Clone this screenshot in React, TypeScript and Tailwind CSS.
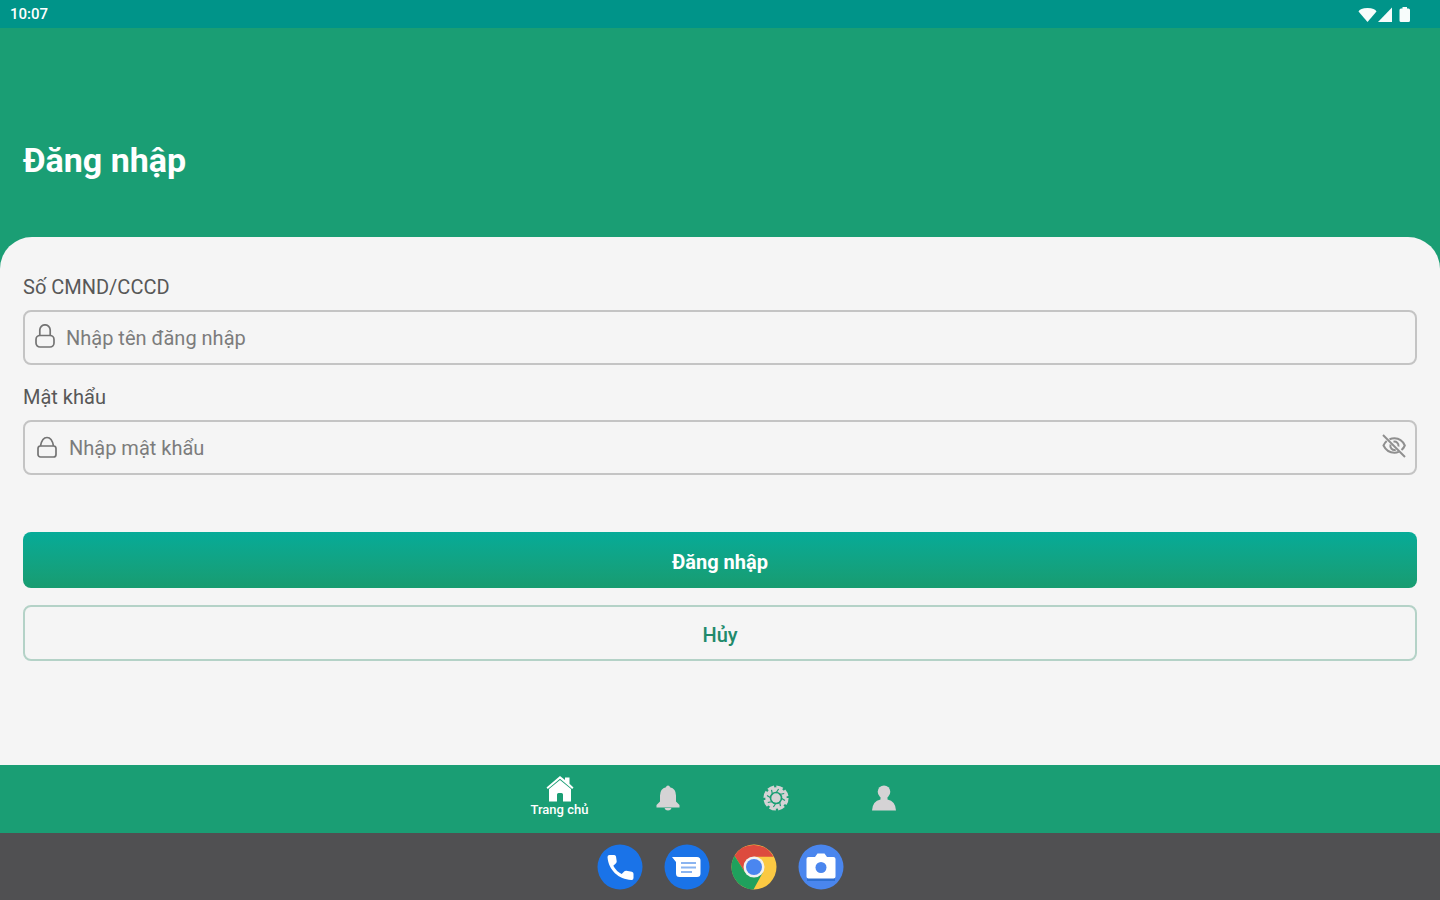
import { useState } from 'react';
import type { ReactNode } from 'react';

const StatusBar = () => (
  <div className="flex h-7 items-center justify-between bg-[#009489] pr-7 pl-[10px] text-white">
    <span className="text-[15px] leading-5 font-medium">10:07</span>
    <svg viewBox="0 0 54 18" className="h-[18px] w-[54px]" fill="#f7fcfb" aria-hidden="true">
      <path d="M9.500 17 .5 6.500Q2 3 9.500 3t9 3.500Z" />
      <path d="M20 17 34 2.500V17Z" />
      <path d="M43 3.500h1.500V2h4.500v1.500h1.500q1.500 0 1.500 1.500v10.500q0 1.500-1.500 1.500H43q-1.500 0-1.500-1.500V5q0-1.500 1.500-1.500Z" />
    </svg>
  </div>
);

const LockIcon = ({ tall = false }: { tall?: boolean }) => (
  <svg viewBox="0 0 24 28" className="h-7 w-6 shrink-0" fill="none" stroke="currentColor" strokeWidth="1.700" aria-hidden="true">
    {tall ? (
      <>
        <path d="M6.800 11.500V6a5.200 5.200 0 0 1 10.400 0v5.500" />
        <rect x="3" y="11.500" width="18" height="11.500" rx="4" />
      </>
    ) : (
      <>
        <path d="M5.500 12q1.500-8.500 6.500-8.500t6.500 8.500" />
        <rect x="3" y="12" width="18" height="11" rx="2.500" />
      </>
    )}
  </svg>
);

const EyeOffIcon = () => (
  <svg viewBox="0 0 26 30" className="h-[30px] w-[26px]" fill="none" stroke="#8f8f8f" strokeWidth="2" aria-hidden="true">
    <path d="M8.500 6.300Q11 5.300 13.500 5.300q7 0 10.300 7.200-1.100 2.700-3.300 4.500M5.700 8Q3.700 9.800 2.500 12.500q3.500 7.200 11 7.200 2.200 0 4.200-.800" />
    <path d="M12.500 8.700a4.200 4.200 0 0 1 5 4.800M9.500 11.500a4.300 4.300 0 0 0 5.200 5.400" />
    <path d="m2 2 22 22" />
  </svg>
);

interface FieldProps {
  id: string;
  label: string;
  placeholder: string;
  type: string;
  icon: ReactNode;
  action?: ReactNode;
  className: string;
}

const Field = ({ id, label, placeholder, type, icon, action, className }: FieldProps) => (
  <div className="flex flex-col gap-[11px]">
    <label htmlFor={id} className="text-[20px] leading-6 text-[#585858]">{label}</label>
    <div className={`flex h-[55px] items-center rounded-lg border-2 border-[#c4c4c4] pr-2 text-[#747474] ${className}`}>
      {icon}
      <input
        id={id}
        type={type}
        placeholder={placeholder}
        className="h-full min-w-0 flex-1 bg-transparent text-[20px] leading-6 outline-none placeholder:text-[#7c7c7c]"
      />
      {action}
    </div>
  </div>
);

const HomeIcon = () => (
  <svg viewBox="0 0 28 26" className="h-[26px] w-7" fill="currentColor" aria-hidden="true">
    <path d="M14 0 19 4V1.500h4.500V7.800l4 3.700-1.300 1.600L14 2.800 1.800 13.100.5 11.500Z" />
    <path d="M14 4 25 13v12.500H17V18.500q0-1.500-1.500-1.500h-3Q11 17 11 18.500v7H3V13Z" />
  </svg>
);

const BellIcon = () => (
  <svg viewBox="0 0 24 26" className="h-[26px] w-6" fill="currentColor" aria-hidden="true">
    <path d="M12 .5q1.800 0 2 1.800 6 1.500 6 8.300v5.900l3.500 3.400V22.500H.5v-2.600L4 16.500v-5.900q0-6.800 6-8.300.2-1.800 2-1.800Z" />
    <path d="M8.500 23h7q-.700 2.500-3.500 2.500T8.500 23Z" />
  </svg>
);

const GearIcon = () => (
  <svg viewBox="0 0 26 26" className="h-[26px] w-[26px]" fill="none" stroke="currentColor" aria-hidden="true">
    <circle cx="13" cy="13" r="11.400" strokeWidth="2.400" strokeDasharray="6.700 2.253" />
    <circle cx="13" cy="13" r="8.500" strokeWidth="4.400" />
    <circle cx="13" cy="13" r="4.700" fill="currentColor" stroke="none" />
    <path
      d="m13 8 2.600-4M16.500 9.500l4.700-1M18 13l4 2.600M16.500 16.500l1 4.700M13 18l-2.600 4M9.500 16.500l-4.700 1M8 13l-4-2.600M9.500 9.500l-1-4.700"
      stroke="#1a9e74"
      strokeWidth="1.200"
    />
  </svg>
);

const UserIcon = () => (
  <svg viewBox="0 0 26 26" className="h-[26px] w-[26px]" fill="currentColor" aria-hidden="true">
    <circle cx="13" cy="6.800" r="6.300" />
    <path d="M9.500 11.500h7v3q8 1.500 8.500 11H1q.5-9.500 8.500-11Z" />
  </svg>
);

const tabs = [
  { name: 'Trang chủ', icon: <HomeIcon />, active: true },
  { name: 'Thông báo', icon: <BellIcon /> },
  { name: 'Cài đặt', icon: <GearIcon /> },
  { name: 'Tài khoản', icon: <UserIcon /> },
];

const TabBar = () => (
  <nav className="flex h-[68px] justify-center bg-[#1a9e74] pl-[3px]">
    {tabs.map(tab => (
      <button
        key={tab.name}
        type="button"
        aria-label={tab.name}
        className={`flex w-[108px] flex-col items-center justify-center ${tab.active ? 'pb-1 text-white' : 'pb-[2px] text-[#d5d3d5]'}`}
      >
        {tab.icon}
        {tab.active && <span className="text-[13px] leading-4 font-medium">{tab.name}</span>}
      </button>
    ))}
  </nav>
);

const PhoneApp = () => (
  <svg viewBox="0 0 46 46" className="h-[46px] w-[46px]" aria-hidden="true">
    <circle cx="23" cy="23" r="22.500" fill="#1a73e8" />
    <path
      d="M12.500 11h4.700q1.600 0 1.800 1.600l.700 4.600q.100 1.200-.700 2l-2.700 2.500q3 5.700 8.400 8.400l2.700-2.800q.800-.800 2-.600l5.400 1q1.700.300 1.700 2v4.300q0 2-2 1.900C21.500 35.500 11.500 26 10.500 13q0-2 2-2Z"
      fill="#fff"
    />
  </svg>
);

const MessagesApp = () => (
  <svg viewBox="0 0 46 46" className="h-[46px] w-[46px]" aria-hidden="true">
    <circle cx="23" cy="23" r="22.500" fill="#1a73e8" />
    <path d="M8 13h25q3.500 0 3.500 3.500v13q0 3.500-3.500 3.500H15.500Q12 33 12 29.500V18Z" fill="#fff" />
    <path d="M17 19h15M17 23.500h15M17 28h11" stroke="#8ab4f0" strokeWidth="2.200" />
  </svg>
);

const ChromeApp = () => (
  <svg viewBox="0 0 46 46" className="h-[46px] w-[46px]" aria-hidden="true">
    <circle cx="23" cy="23" r="22.500" fill="#fbc943" />
    <path d="M3.500 11.750A22.500 22.500 0 0 1 42.500 12.750H23L14 28.200Z" fill="#dd4b3e" />
    <path d="M3.500 11.750 14 28.200 23 33.250 32 28.200 22.500 45.500A22.500 22.500 0 0 1 3.500 11.750Z" fill="#1fa15d" />
    <circle cx="23" cy="23" r="10.500" fill="#f1f1f1" />
    <circle cx="23" cy="23" r="8" fill="#4a86f0" />
  </svg>
);

const CameraApp = () => (
  <svg viewBox="0 0 46 46" className="h-[46px] w-[46px]" aria-hidden="true">
    <circle cx="23" cy="23" r="22.500" fill="#4a86ee" />
    <path d="M9 34h28v3H9Z" fill="#2f6fd0" />
    <path d="M10.500 13H17l2.500-3.500h7L29 13h6.500q2 0 2 2v17.500q0 2-2 2h-25q-2 0-2-2V15q0-2 2-2Z" fill="#fff" />
    <circle cx="23" cy="23.500" r="5.500" fill="#4a86ee" />
  </svg>
);

const apps = [
  { name: 'Phone', icon: <PhoneApp /> },
  { name: 'Messages', icon: <MessagesApp /> },
  { name: 'Chrome', icon: <ChromeApp /> },
  { name: 'Camera', icon: <CameraApp /> },
];

const Dock = () => (
  <footer className="flex h-[67px] items-center justify-center gap-[21px] bg-[#505052]">
    {apps.map(app => (
      <button key={app.name} type="button" aria-label={app.name}>
        {app.icon}
      </button>
    ))}
  </footer>
);

export default function App() {
  const [showPassword, setShowPassword] = useState(false);

  return (
    <div className="flex min-h-screen flex-col bg-[#1a9e74] font-['Roboto','Noto_Sans',sans-serif]">
      <StatusBar />
      <header className="px-[23px] pt-28 pb-[57px]">
        <h1 className="text-[34px] leading-10 font-bold text-white">Đăng nhập</h1>
      </header>

      <main className="flex-1 rounded-t-[32px] bg-[#f5f5f5] px-[23px] pt-[38px] pb-8">
        <form onSubmit={e => e.preventDefault()}>
          <div className="flex flex-col gap-5">
            <Field
              id="username"
              label="Số CMND/CCCD"
              placeholder="Nhập tên đăng nhập"
              type="text"
              icon={<LockIcon tall />}
              className="gap-[9px] pl-2"
            />
            <Field
              id="password"
              label="Mật khẩu"
              placeholder="Nhập mật khẩu"
              type={showPassword ? 'text' : 'password'}
              icon={<LockIcon />}
              className="gap-[10px] pl-[10px]"
              action={
                <button type="button" aria-label="Hiện mật khẩu" onClick={() => setShowPassword(!showPassword)}>
                  <EyeOffIcon />
                </button>
              }
            />
          </div>

          <div className="mt-[57px] flex flex-col gap-[17px]">
            <button
              type="submit"
              className="h-14 rounded-lg bg-linear-to-b from-[#06ab98] to-[#189c70] pt-[3px] text-[20px] leading-6 font-bold text-white"
            >
              Đăng nhập
            </button>
            <button
              type="button"
              className="h-14 rounded-lg border-2 border-[#b4d2c7] pt-[3px] text-[20px] leading-6 font-medium text-[#218a6b]"
            >
              Hủy
            </button>
          </div>
        </form>
      </main>

      <TabBar />
      <Dock />
    </div>
  );
}
